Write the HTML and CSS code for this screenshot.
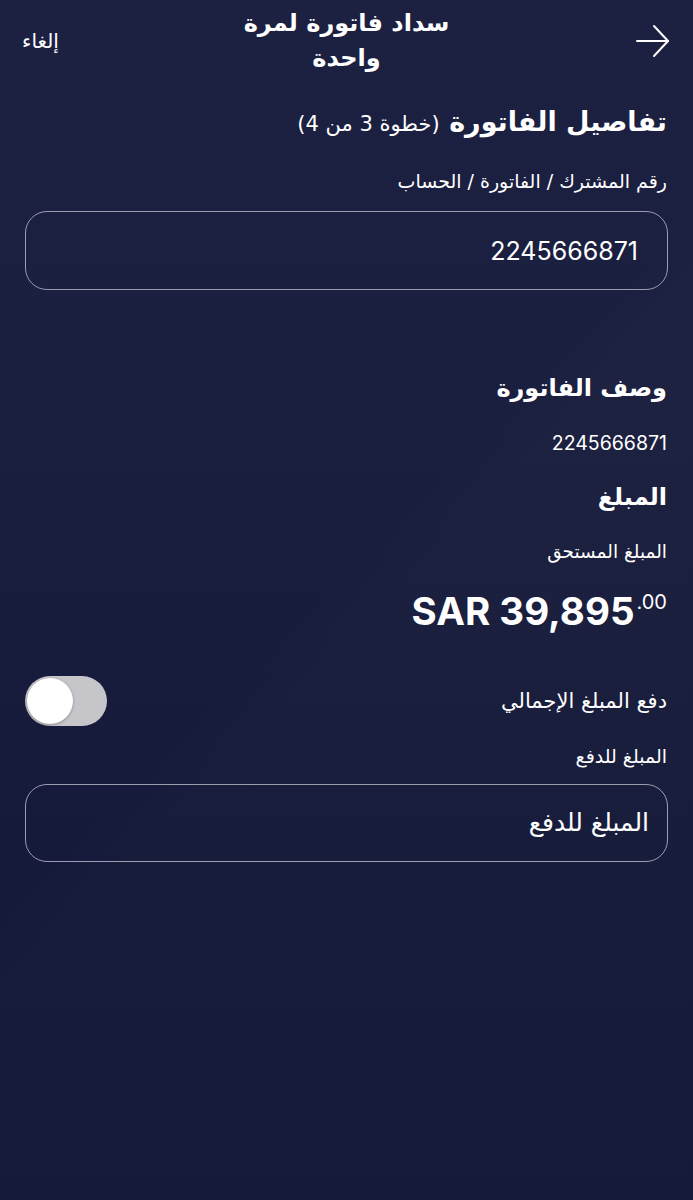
FILE: index.html
```html
<!DOCTYPE html>
<html lang="ar" dir="rtl">
<head>
    <meta charset="UTF-8">
    <title>سداد فاتورة لمرة واحدة</title>
    <link rel="stylesheet" href="styles.css">
</head>
<body>
    <div class="screen">
        <div class="top-bar">
            <button class="back-btn" aria-label="رجوع">
                <svg width="36" height="36" viewBox="0 0 36 36" fill="none" stroke="#ffffff" stroke-width="2" stroke-linecap="round" stroke-linejoin="round">
                    <path d="M2 18 H33"/>
                    <path d="M19 3 L33 18 L19 33"/>
                </svg>
            </button>
            <div class="page-title">سداد فاتورة لمرة واحدة</div>
            <button class="cancel-btn">إلغاء</button>
        </div>

        <div class="content">
            <h1 class="step-title">تفاصيل الفاتورة <span class="step-count">(خطوة 3 من 4)</span></h1>

            <div class="field-label label-first">رقم المشترك / الفاتورة / الحساب</div>
            <div class="text-box account-box">2245666871</div>

            <h2 class="section-title desc-title">وصف الفاتورة</h2>
            <div class="info-text info-number">2245666871</div>

            <h2 class="section-title">المبلغ</h2>
            <div class="info-text">المبلغ المستحق</div>
            <div class="amount"><span class="amount-main">SAR 39,895</span><span class="amount-cents">.00</span></div>

            <div class="toggle-row">
                <span class="toggle-label">دفع المبلغ الإجمالي</span>
                <div class="toggle"><div class="toggle-knob"></div></div>
            </div>

            <div class="field-label label-pay">المبلغ للدفع</div>
            <div class="text-box pay-box"><span class="placeholder">المبلغ للدفع</span></div>
        </div>
    </div>
</body>
</html>
```

FILE: styles.css
```css
html, body {
    margin: 0;
    padding: 0;
}
body {
    width: 693px;
    min-height: 1200px;
    font-family: "DejaVu Sans", sans-serif;
    color: #ffffff;
    background-color: #181c3c;
    background-image:
        linear-gradient(135deg, rgba(0,0,0,0) 48%, rgba(255,255,255,0.012) 52%),
        linear-gradient(180deg, #1d2141 0%, #1b1f3f 35%, #161a3a 70%, #131738 100%);
}
.screen {
    min-height: 1200px;
}
.top-bar {
    display: grid;
    grid-template-columns: 1fr 230px 1fr;
    align-items: center;
    padding: 6px 22px 0 22px;
    height: 70px;
}
.back-btn {
    justify-self: start;
    background: none;
    border: none;
    padding: 0;
    width: 36px;
    height: 36px;
    cursor: pointer;
}
.back-btn svg {
    display: block;
}
.page-title {
    text-align: center;
    font-size: 24px;
    font-weight: bold;
    line-height: 35px;
}
.cancel-btn {
    justify-self: end;
    background: none;
    border: none;
    color: #ffffff;
    font-family: inherit;
    font-size: 20px;
    line-height: 24px;
    padding: 0;
    cursor: pointer;
}
.content {
    padding: 0 25px;
}
.step-title {
    margin: 28px 1px 0 0;
    height: 36px;
    font-size: 27px;
    font-weight: bold;
    line-height: 36px;
}
.step-count {
    font-size: 21px;
    font-weight: normal;
}
.field-label {
    font-size: 19px;
    line-height: 24px;
    height: 24px;
    margin-right: 1px;
}
.label-first {
    margin-top: 29px;
}
.text-box {
    box-sizing: border-box;
    display: flex;
    align-items: center;
    height: 79px;
    border: 1.5px solid #9a9db0;
    border-radius: 22px;
    line-height: 30px;
}
.account-box {
    margin-top: 18px;
    padding-right: 29px;
    font-family: Inter, "Liberation Sans", sans-serif;
    font-size: 25px;
}
.section-title {
    margin: 25px 1px 0 0;
    height: 34px;
    font-size: 24px;
    font-weight: bold;
    line-height: 34px;
}
.desc-title {
    margin-top: 81px;
}
.info-text {
    margin: 26px 1px 0 0;
    height: 24px;
    font-size: 18.5px;
    line-height: 24px;
}
.info-number {
    font-family: Inter, "Liberation Sans", sans-serif;
    font-size: 19.5px;
}
.amount {
    direction: ltr;
    text-align: right;
    margin: 24px 1px 0 0;
    height: 46px;
    line-height: 46px;
    font-family: Inter, "Liberation Sans", sans-serif;
    font-weight: bold;
}
.amount-main {
    font-size: 38.5px;
}
.amount-cents {
    display: inline-block;
    font-size: 20px;
    font-weight: normal;
    line-height: 20px;
    vertical-align: 16px;
    margin-left: 2px;
}
.toggle-row {
    display: flex;
    align-items: center;
    justify-content: space-between;
    margin-top: 42px;
    height: 50px;
}
.toggle-label {
    font-size: 21px;
    line-height: 28px;
    margin-right: 1px;
}
.toggle {
    box-sizing: border-box;
    width: 82px;
    height: 50px;
    border-radius: 25px;
    background-color: #c6c6ca;
    padding: 2px;
    display: flex;
    direction: ltr;
}
.toggle-knob {
    width: 46px;
    height: 46px;
    border-radius: 50%;
    background-color: #ffffff;
    box-shadow: 0 1px 3px rgba(0,0,0,0.3);
}
.label-pay {
    margin-top: 18px;
}
.pay-box {
    margin-top: 16px;
    height: 78px;
    padding-right: 18px;
    font-size: 25px;
}
.placeholder {
    color: #ffffff;
}
```
